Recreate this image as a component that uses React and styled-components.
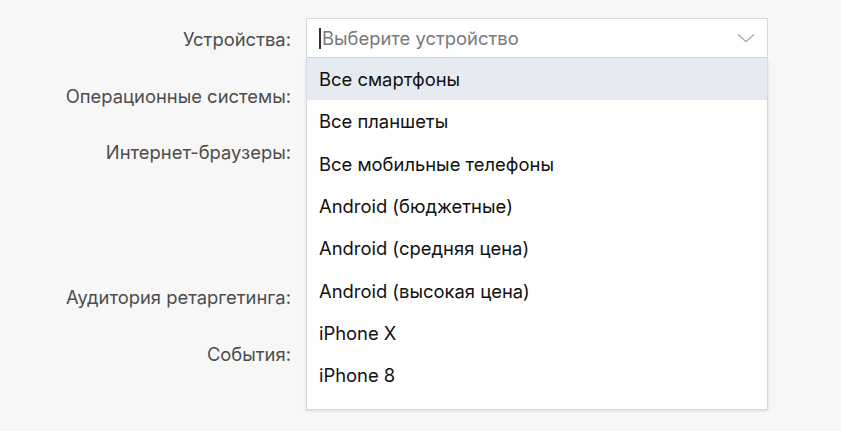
import React from "react";
import styled, { createGlobalStyle } from "styled-components";

const Global = createGlobalStyle`
  html, body { margin: 0; padding: 0; background: #f7f7f8; }
  body { font-family: "Inter", "Noto Sans", sans-serif; -webkit-font-smoothing: antialiased; }
`;

const Page = styled.div`
  width: 841px;
  height: 431px;
  overflow: hidden;
  position: relative;
  background: #f7f7f8;
`;

const Form = styled.div`
  display: flex;
  flex-direction: column;
  padding-top: 18px;
`;

const Row = styled.div`
  display: flex;
  align-items: flex-start;
  height: ${(p) => p.$h}px;
`;

const Label = styled.div`
  width: 291px;
  flex-shrink: 0;
  text-align: right;
  font-size: 18.4px;
  line-height: 40px;
  color: #4d4d4d;
  padding-top: ${(p) => p.$top || 0}px;
`;

const Field = styled.div`
  margin-left: 15px;
  width: 462px;
  position: relative;
`;

const SelectBox = styled.div`
  height: 40px;
  box-sizing: border-box;
  border: 1px solid #d3d9de;
  background: #fff;
  display: flex;
  align-items: center;
  padding-left: 12px;
  padding-right: 12px;
`;

const Caret = styled.span`
  width: 2px;
  height: 21px;
  background: #333;
  margin-right: 1px;
`;

const Placeholder = styled.span`
  flex: 1;
  font-size: 18.4px;
  color: #7a7a7a;
`;

const Menu = styled.div`
  position: absolute;
  left: 0;
  top: 40px;
  width: 462px;
  box-sizing: border-box;
  background: #fff;
  border: 1px solid #d3d9de;
  border-top: none;
  box-shadow: 0 1px 3px rgba(0, 0, 0, 0.12);
  padding-bottom: 13px;
  z-index: 2;
`;

const Item = styled.div`
  height: 42.3px;
  display: flex;
  align-items: center;
  padding-left: 12px;
  font-size: 18.4px;
  color: #111;
  background: ${(p) => (p.$active ? "#e5ebf1" : "#fff")};
`;

const items = [
  "Все смартфоны",
  "Все планшеты",
  "Все мобильные телефоны",
  "Android (бюджетные)",
  "Android (средняя цена)",
  "Android (высокая цена)",
  "iPhone X",
  "iPhone 8",
];

const Chevron = () => (
  <svg width="18" height="10" viewBox="0 0 18 10" fill="none">
    <path d="M1 1.5 L9 8.5 L17 1.5" stroke="#a9b1ba" strokeWidth="1.6" />
  </svg>
);

export default function App() {
  return (
    <Page>
      <Global />
      <Form>
        <Row $h={58}>
          <Label $top={1}>Устройства:</Label>
          <Field>
            <SelectBox>
              <Caret />
              <Placeholder>Выберите устройство</Placeholder>
              <Chevron />
            </SelectBox>
            <Menu>
              {items.map((t, i) => (
                <Item key={t} $active={i === 0}>
                  {t}
                </Item>
              ))}
            </Menu>
          </Field>
        </Row>
        <Row $h={56}>
          <Label $top={0}>Операционные системы:</Label>
        </Row>
        <Row $h={145}>
          <Label>Интернет-браузеры:</Label>
        </Row>
        <Row $h={57}>
          <Label>Аудитория ретаргетинга:</Label>
        </Row>
        <Row $h={60}>
          <Label>События:</Label>
        </Row>
      </Form>
    </Page>
  );
}
